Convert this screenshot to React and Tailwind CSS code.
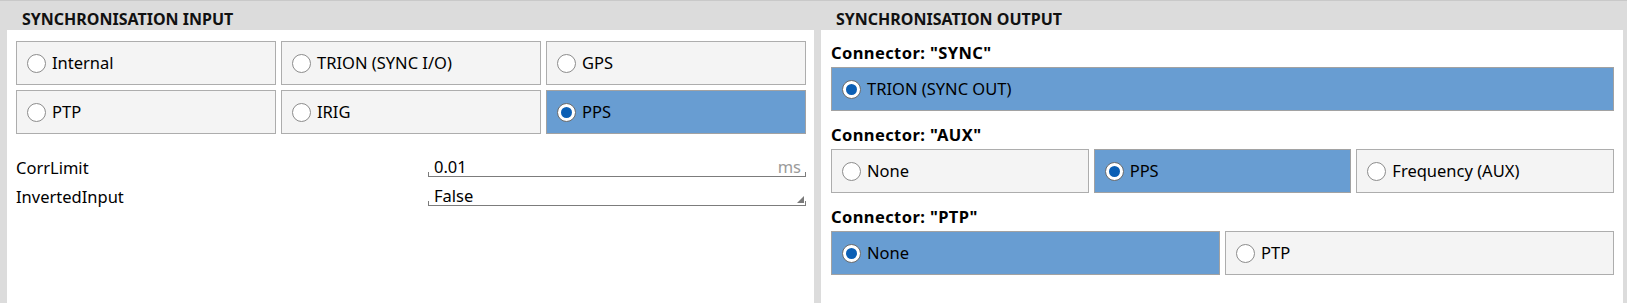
import React from "react";

function Radio({ checked }) {
  return (
    <span
      className={`w-[19px] h-[19px] rounded-full bg-white border flex items-center justify-center shrink-0 ${
        checked ? "border-[#6a6a6a]" : "border-[#8c8c8c]"
      }`}
    >
      {checked && <span className="w-[11px] h-[11px] rounded-full bg-[#0b5fb5]" />}
    </span>
  );
}

function Opt({ label, checked }) {
  return (
    <div
      className={`h-[44px] flex items-center gap-[6px] pl-[10px] border text-[16.5px] leading-[20px] text-black ${
        checked ? "bg-[#689dd2] border-[#a2a2a2]" : "bg-[#f4f4f4] border-[#adadad]"
      }`}
    >
      <Radio checked={checked} />
      <span>{label}</span>
    </div>
  );
}

function Field({ value, unit, dropdown }) {
  return (
    <div className="relative flex-1 h-[19px] border-b border-[#7c7c7c] flex items-end justify-between px-[6px]">
      <span className="absolute left-0 bottom-0 w-px h-[4px] bg-[#7c7c7c]" />
      <span className="absolute right-0 bottom-0 w-px h-[4px] bg-[#7c7c7c]" />
      <span className="text-[16.5px] leading-[18px] text-black">{value}</span>
      {unit && <span className="text-[16.5px] leading-[18px] text-[#9a9a9a] -mr-[1px]">{unit}</span>}
      {dropdown && (
        <svg className="absolute right-[2px] bottom-[2px]" width="7" height="7" viewBox="0 0 7 7">
          <polygon points="7,0 7,7 0,7" fill="#7a7a7a" />
        </svg>
      )}
    </div>
  );
}

function Section({ title, children, first }) {
  return (
    <div className={first ? "" : "mt-[15px]"}>
      <div className="text-[16.5px] leading-[18px] font-bold tracking-[0.4px] text-black mb-[5px]">{title}</div>
      {children}
    </div>
  );
}

export default function App() {
  return (
    <div className="w-[1627px] h-[303px] bg-[#dcdcdc] border-t border-[#c9c9c9] flex font-['Noto_Sans',sans-serif] overflow-hidden">
      {/* Left panel */}
      <div className="w-[814px] flex flex-col pl-[7px]">
        <div className="h-[29px] pt-[8px] pl-[15px] text-[16px] leading-[20px] font-bold text-[#111]">
          SYNCHRONISATION INPUT
        </div>
        <div className="flex-1 bg-white pt-[11px] pl-[9px] pr-[8px]">
          <div className="grid grid-cols-3 gap-[5px]">
            <Opt label="Internal" />
            <Opt label="TRION (SYNC I/O)" />
            <Opt label="GPS" />
            <Opt label="PTP" />
            <Opt label="IRIG" />
            <Opt label="PPS" checked />
          </div>
          <div className="mt-[24px] flex flex-col gap-[10px]">
            <div className="flex items-end">
              <div className="w-[412px] text-[16.5px] leading-[18px] text-black">CorrLimit</div>
              <Field value="0.01" unit="ms" />
            </div>
            <div className="flex items-end">
              <div className="w-[412px] text-[16.5px] leading-[18px] text-black">InvertedInput</div>
              <Field value="False" dropdown />
            </div>
          </div>
        </div>
      </div>

      {/* Right panel */}
      <div className="flex-1 flex flex-col pl-[7px] pr-[4px]">
        <div className="h-[29px] pt-[8px] pl-[15px] text-[16px] leading-[20px] font-bold text-[#111]">
          SYNCHRONISATION OUTPUT
        </div>
        <div className="flex-1 bg-white pt-[14px] pl-[10px] pr-[9px]">
          <Section title={'Connector: "SYNC"'} first>
            <Opt label="TRION (SYNC OUT)" checked />
          </Section>
          <Section title={'Connector: "AUX"'}>
            <div className="grid grid-cols-3 gap-[5px]">
              <Opt label="None" />
              <Opt label="PPS" checked />
              <Opt label="Frequency (AUX)" />
            </div>
          </Section>
          <Section title={'Connector: "PTP"'}>
            <div className="grid grid-cols-2 gap-[5px]">
              <Opt label="None" checked />
              <Opt label="PTP" />
            </div>
          </Section>
        </div>
      </div>
    </div>
  );
}
